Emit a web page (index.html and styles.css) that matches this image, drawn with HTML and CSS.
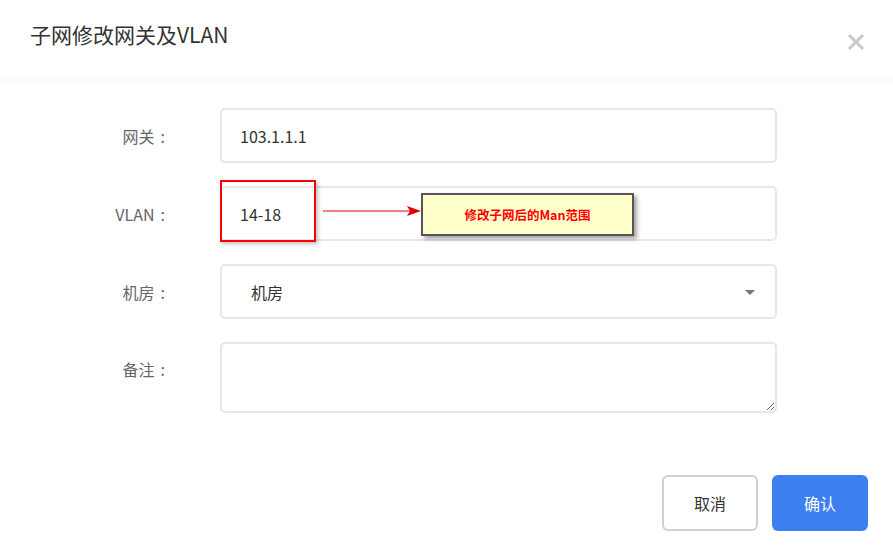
FILE: index.html
```html
<!DOCTYPE html>
<html lang="zh">
<head>
<meta charset="utf-8">
<title>子网修改网关及VLAN</title>
<link rel="stylesheet" href="styles.css">
</head>
<body>
<div class="modal">
  <div class="header">
    <h1 class="title">子网修改网关及VLAN</h1>
    <span class="close"><svg width="16" height="16" viewBox="0 0 16 16"><path d="M2 2 L14 14 M14 2 L2 14" stroke="#c8c8c8" stroke-width="3" stroke-linecap="square"/></svg></span>
  </div>
  <div class="body">
    <div class="form">
      <label class="label">网关<span class="colon">:</span></label>
      <div class="field input">103.1.1.1</div>

      <label class="label">VLAN<span class="colon">:</span></label>
      <div class="field input vlan">
        14-18
        <div class="mark"></div>
        <div class="arrow">
          <svg width="98" height="12" viewBox="0 0 98 12"><line x1="0" y1="6" x2="88" y2="6" stroke="#e00000" stroke-width="1"/><path d="M84 1 L98 6 L84 11 L87 6 Z" fill="#e00000"/></svg>
        </div>
        <div class="callout">修改子网后的Man范围</div>
      </div>

      <label class="label">机房<span class="colon">:</span></label>
      <div class="field select">机房<span class="caret"></span></div>

      <label class="label top">备注<span class="colon">:</span></label>
      <textarea class="field textarea"></textarea>
    </div>
  </div>
  <div class="footer">
    <button class="btn cancel">取消</button>
    <button class="btn ok">确认</button>
  </div>
</div>
</body>
</html>
```
FILE: styles.css
```css
html, body {
  margin: 0;
  padding: 0;
  background: #fff;
}
body {
  font-family: "Noto Sans CJK SC", "Open Sans", sans-serif;
  width: 893px;
  height: 560px;
  overflow: hidden;
}
.modal {
  display: flex;
  flex-direction: column;
  height: 560px;
}
.header {
  height: 77px;
  display: flex;
  justify-content: space-between;
  align-items: flex-start;
  padding: 0 29px 0 30px;
  box-shadow: 0 4px 10px rgba(0,0,0,0.035);
  position: relative;
  z-index: 1;
}
.title {
  margin: 18px 0 0;
  font-size: 21px;
  font-weight: 400;
  color: #333;
  line-height: 32px;
}
.close {
  margin-top: 34px;
  line-height: 0;
}
.body {
  padding-top: 31px;
}
.form {
  display: grid;
  grid-template-columns: 220px 557px;
  row-gap: 23px;
}
.label {
  text-align: right;
  padding-right: 55px;
  font-size: 16px;
  color: #666;
  align-self: center;
}
.colon {
  margin-left: 6px;
}
.label.top {
  align-self: start;
  padding-top: 15px;
}
.field {
  box-sizing: border-box;
  border: 2px solid #e5e8eb;
  border-radius: 5px;
  font-family: inherit;
  font-size: 16px;
  color: #333;
}
.input {
  height: 55px;
  display: flex;
  align-items: center;
  padding-left: 18px;
}
.vlan {
  position: relative;
}
.select {
  height: 55px;
  display: flex;
  align-items: center;
  padding-left: 29px;
  position: relative;
}
.caret {
  position: absolute;
  right: 20px;
  top: 24px;
  width: 0;
  height: 0;
  border-left: 5px solid transparent;
  border-right: 5px solid transparent;
  border-top: 5px solid #777;
}
.textarea {
  height: 71px;
  resize: vertical;
  outline: none;
  margin: 0;
  padding: 10px 19px;
}
.mark {
  position: absolute;
  left: -2px;
  top: -8px;
  width: 96px;
  height: 62px;
  box-sizing: border-box;
  border: 2px solid #ff0000;
  box-shadow: 2px 2px 4px rgba(0,0,0,0.25);
}
.arrow {
  position: absolute;
  left: 101px;
  top: 17px;
  height: 12px;
  line-height: 0;
}
.callout {
  position: absolute;
  left: 199px;
  top: 5px;
  width: 213px;
  height: 43px;
  box-sizing: border-box;
  background: #ffffcc;
  border: 2px solid #555;
  box-shadow: 3px 3px 4px rgba(0,0,0,0.35);
  display: flex;
  align-items: center;
  justify-content: center;
  color: #ff0000;
  font-weight: 700;
  font-size: 12.5px;
}
.footer {
  margin-top: auto;
  display: flex;
  justify-content: flex-end;
  gap: 14px;
  padding: 0 25px 29px 0;
}
.btn {
  box-sizing: border-box;
  width: 96px;
  height: 56px;
  border-radius: 6px;
  font-family: inherit;
  font-size: 16px;
  cursor: pointer;
}
.cancel {
  background: #fff;
  border: 2px solid #d0d0d0;
  color: #333;
}
.ok {
  background: #3b7ff0;
  border: none;
  color: #fff;
}
```
